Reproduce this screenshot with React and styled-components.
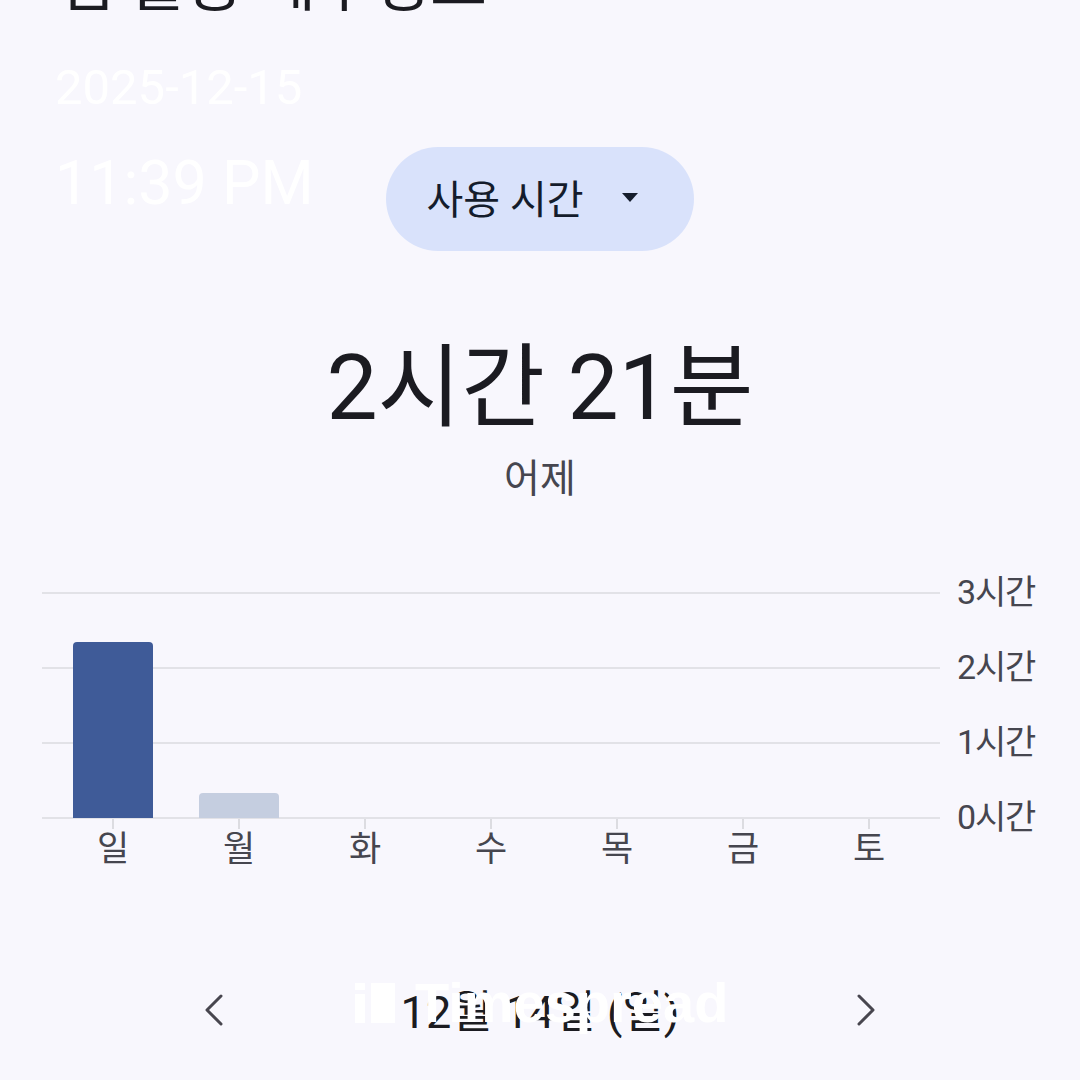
import styled, { createGlobalStyle } from "styled-components";

const GlobalStyle = createGlobalStyle`
  body {
    margin: 0;
    background: #f8f7fd;
    font-family: Roboto, "Noto Sans CJK KR", "Noto Sans", sans-serif;
  }
`;

const days = [
  { label: "일", hours: 2.35, active: true },
  { label: "월", hours: 0.33 },
  { label: "화", hours: 0 },
  { label: "수", hours: 0 },
  { label: "목", hours: 0 },
  { label: "금", hours: 0 },
  { label: "토", hours: 0 },
];

const HOUR_PX = 75;

const Screen = styled.div`
  position: relative;
  width: 1080px;
  height: 1080px;
  overflow: hidden;
  display: flex;
  flex-direction: column;
  align-items: center;
`;

const Title = styled.h1`
  align-self: flex-start;
  margin: -46px 0 0 57px;
  font-size: 62px;
  line-height: 1;
  font-weight: 400;
  color: #1b1b21;
  white-space: nowrap;
`;

const MetricButton = styled.button`
  margin-top: 131px;
  width: 308px;
  height: 104px;
  border: none;
  border-radius: 52px;
  background: #d9e2fb;
  color: #141c2c;
  font-family: inherit;
  font-size: 40px;
  display: flex;
  align-items: center;
  justify-content: center;
  gap: 38px;
  padding: 0 16px 4px 0;
`;

const Total = styled.div`
  margin-top: 92px;
  font-size: 91px;
  line-height: 1;
  color: #1b1b21;
`;

const Caption = styled.div`
  margin-top: 26px;
  font-size: 39px;
  line-height: 1;
  color: #46464f;
`;

const Chart = styled.div`
  margin-top: 93px;
  align-self: flex-start;
  margin-left: 42px;
  display: flex;
  gap: 17px;
`;

const PlotColumn = styled.div`
  width: 898px;
  display: flex;
  flex-direction: column;
`;

const Plot = styled.div`
  height: 227px;
  padding: 0 8px 1px;
  box-sizing: border-box;
  display: flex;
  align-items: flex-end;
  background: repeating-linear-gradient(
    to bottom,
    #e2e2e7 0 2px,
    transparent 2px 75px
  );
`;

const BarSlot = styled.div`
  flex: 1;
  display: flex;
  justify-content: center;
  align-items: flex-end;
`;

const Bar = styled.div`
  width: 80px;
  border-radius: 4px 4px 0 0;
  background: ${(p) => (p.$active ? "#3f5b98" : "#c5cee0")};
`;

const DayRow = styled.div`
  display: flex;
  padding: 0 8px;
`;

const DayCell = styled.div`
  flex: 1;
  display: flex;
  flex-direction: column;
  align-items: center;
  font-size: 35px;
  line-height: 1;
  color: #46464f;

  &::before {
    content: "";
    width: 2px;
    height: 10px;
    background: #dcdce1;
    margin-bottom: 3px;
  }
`;

const Axis = styled.div`
  height: 227px;
  margin-top: -4px;
  display: flex;
  flex-direction: column;
  justify-content: space-between;
`;

const AxisLabel = styled.div`
  height: 2px;
  display: flex;
  align-items: center;
  font-size: 34px;
  letter-spacing: -1.2px;
  color: #46464f;
  white-space: nowrap;
`;

const DateNav = styled.div`
  margin-top: 117px;
  width: 701px;
  display: flex;
  align-items: center;
  justify-content: space-between;
`;

const NavButton = styled.div`
  width: 48px;
  height: 48px;
  display: flex;
  align-items: center;
  justify-content: center;
`;

const NavDate = styled.div`
  font-size: 45px;
  line-height: 1;
  color: #1b1b21;
  padding-top: 6px;
`;

const Stamp = styled.div`
  position: absolute;
  left: 55px;
  top: ${(p) => p.$top}px;
  font-family: Roboto, "Liberation Sans", sans-serif;
  font-size: ${(p) => p.$size}px;
  line-height: 1;
  color: #ffffff;
`;

const Watermark = styled.div`
  position: absolute;
  left: 355px;
  top: 983px;
  display: flex;
  align-items: center;
  gap: 20px;
  font-family: "Liberation Sans", Arial, sans-serif;
  font-weight: 700;
  font-size: 56px;
  line-height: 40px;
  color: #ffffff;
`;

const Chevron = ({ flip }) => (
  <svg width="20" height="32" viewBox="0 0 20 32" fill="none">
    <path
      d={flip ? "M3 2 L17 16 L3 30" : "M17 2 L3 16 L17 30"}
      stroke="#48464f"
      strokeWidth="3"
      strokeLinecap="round"
      strokeLinejoin="round"
    />
  </svg>
);

const App = () => (
  <Screen>
    <GlobalStyle />
    <Title>앱 활동 세부정보</Title>

    <MetricButton>
      <span>사용 시간</span>
      <svg width="16" height="9" viewBox="0 0 16 9">
        <polygon points="0,0 16,0 8,9" fill="#141c2c" />
      </svg>
    </MetricButton>

    <Total>2시간 21분</Total>
    <Caption>어제</Caption>

    <Chart>
      <PlotColumn>
        <Plot>
          {days.map((d) => (
            <BarSlot key={d.label}>
              {d.hours > 0 && (
                <Bar $active={d.active} style={{ height: d.hours * HOUR_PX }} />
              )}
            </BarSlot>
          ))}
        </Plot>
        <DayRow>
          {days.map((d) => (
            <DayCell key={d.label}>{d.label}</DayCell>
          ))}
        </DayRow>
      </PlotColumn>
      <Axis>
        <AxisLabel>3시간</AxisLabel>
        <AxisLabel>2시간</AxisLabel>
        <AxisLabel>1시간</AxisLabel>
        <AxisLabel>0시간</AxisLabel>
      </Axis>
    </Chart>

    <DateNav>
      <NavButton>
        <Chevron />
      </NavButton>
      <NavDate>12월 14일 (일)</NavDate>
      <NavButton>
        <Chevron flip />
      </NavButton>
    </DateNav>

    <Stamp $top={63} $size={49}>2025-12-15</Stamp>
    <Stamp $top={153} $size={61}>11:39 PM</Stamp>

    <Watermark>
      <svg width="40" height="40" viewBox="0 0 40 40">
        <rect x="0" y="0" width="10" height="7" fill="#ffffff" />
        <rect x="0" y="11" width="10" height="29" fill="#ffffff" />
        <rect x="16" y="0" width="24" height="40" fill="#ffffff" />
      </svg>
      <span>Timespread</span>
    </Watermark>
  </Screen>
);

export default App;
